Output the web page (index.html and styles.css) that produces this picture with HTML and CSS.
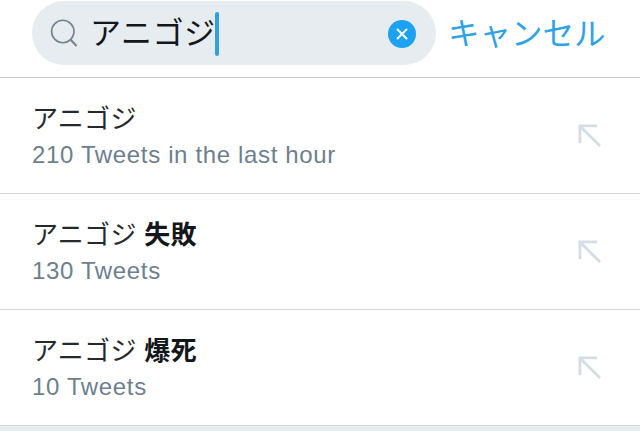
FILE: index.html
```html
<!DOCTYPE html>
<html lang="ja">
<head>
<meta charset="utf-8">
<title>Search</title>
<link rel="stylesheet" href="styles.css">
</head>
<body>
<header class="topbar">
  <div class="search">
    <svg class="search-icon" viewBox="0 0 28 28" width="28" height="28"><circle cx="12.800" cy="12.500" r="11.200" fill="none" stroke="#75838f" stroke-width="1.600"/><path d="M20.500 20.500L26.500 27" fill="none" stroke="#75838f" stroke-width="2"/></svg>
    <span class="query">アニゴジ</span><span class="caret"></span>
    <svg class="clear" viewBox="0 0 28 28" width="28" height="28"><circle cx="14" cy="14" r="14" fill="#1da1f2"/><path d="M9.500 9.500L18.500 18.500M18.500 9.500L9.500 18.500" stroke="#fff" stroke-width="2" stroke-linecap="round"/></svg>
  </div>
  <span class="cancel">キャンセル</span>
</header>
<ul class="list">
  <li class="row">
    <div class="text"><div class="title">アニゴジ</div><div class="meta">210 Tweets in the last hour</div></div>
    <svg class="arrow" viewBox="0 0 24 24" width="23" height="23"><path d="M2 20V2H20M2.500 2.500L23 23" fill="none" stroke="#d5dee4" stroke-width="3"/></svg>
  </li>
  <li class="row">
    <div class="text"><div class="title">アニゴジ <b>失敗</b></div><div class="meta">130 Tweets</div></div>
    <svg class="arrow" viewBox="0 0 24 24" width="23" height="23"><path d="M2 20V2H20M2.500 2.500L23 23" fill="none" stroke="#d5dee4" stroke-width="3"/></svg>
  </li>
  <li class="row">
    <div class="text"><div class="title">アニゴジ <b>爆死</b></div><div class="meta">10 Tweets</div></div>
    <svg class="arrow" viewBox="0 0 24 24" width="23" height="23"><path d="M2 20V2H20M2.500 2.500L23 23" fill="none" stroke="#d5dee4" stroke-width="3"/></svg>
  </li>
</ul>
<div class="footer"></div>
</body>
</html>
```
FILE: styles.css
```css
* { box-sizing: border-box; }
html, body { margin: 0; padding: 0; }
body {
  width: 640px;
  height: 431px;
  overflow: hidden;
  background: #fff;
  font-family: "Liberation Sans", "Noto Sans CJK JP", sans-serif;
  color: #14171a;
}
.topbar {
  height: 78px;
  display: flex;
  align-items: flex-start;
  padding: 1px 0 0 32px;
  border-bottom: 1px solid #c8c8c8;
}
.search {
  width: 404px;
  height: 64px;
  border-radius: 32px;
  background: #e6ecf0;
  display: flex;
  align-items: center;
  padding: 0 20px 0 18px;
}
.search-icon { flex: none; }
.query {
  margin-left: 12px;
  font-size: 31px;
  letter-spacing: 0.5px;
  line-height: 66px;
  height: 64px;
}
.caret {
  width: 4px;
  height: 44px;
  border-radius: 2px;
  background: #2f9fe0;
  margin-left: 0;
  margin-top: 1px;
}
.clear { margin-left: auto; flex: none; margin-top: 2px; }
.cancel {
  margin-left: 12px;
  font-size: 31.500px;
  line-height: 66px;
  color: #2fa3e6;
}
.list { list-style: none; margin: 0; padding: 0; }
.row {
  height: 116px;
  display: flex;
  align-items: center;
  justify-content: space-between;
  padding: 0 39px 0 32px;
  border-bottom: 1px solid #d4d8dc;
}
.text { padding-top: 1px; }
.title { font-size: 26px; line-height: 38px; letter-spacing: 0.3px; color: #24292e; }
.title b { font-weight: 700; color: #14171a; }
.meta { font-size: 24px; line-height: 34px; color: #6e7f8e; letter-spacing: 0.65px; }
.arrow { flex: none; }
.footer { height: 6px; background: #e6ecf0; }
```
